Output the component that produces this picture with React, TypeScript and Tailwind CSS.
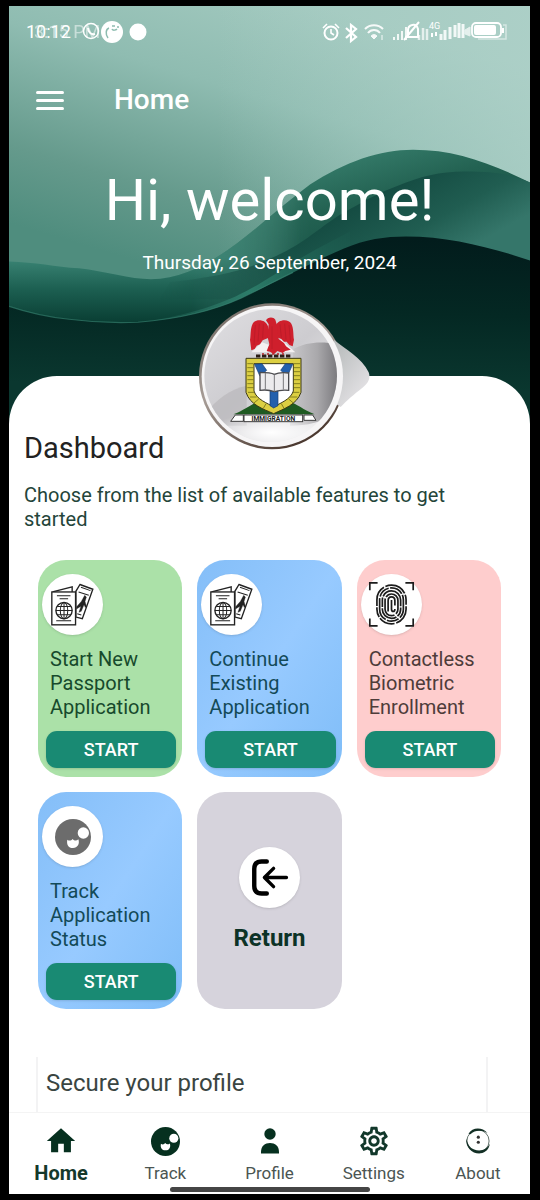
import type { ReactNode } from 'react';
import { MdHome, MdOutlineSettings } from 'react-icons/md';

interface Feature {
  id: string;
  title: string;
  cardClass: string;
  textClass: string;
  icon: ReactNode;
}

interface NavItem {
  label: string;
  active?: boolean;
  icon: ReactNode;
}

function HeaderWaves() {
  return (
    <svg
      className="absolute inset-0 h-full w-full"
      viewBox="9 6 521 419"
      preserveAspectRatio="none"
      aria-hidden="true"
    >
      <defs>
        <linearGradient id="sky" gradientUnits="userSpaceOnUse" x1="300" y1="0" x2="215" y2="285">
          <stop offset="0" stopColor="#a2c9bf" />
          <stop offset="0.35" stopColor="#8fbcb1" />
          <stop offset="0.75" stopColor="#659a8c" />
          <stop offset="1" stopColor="#4f8d7e" />
        </linearGradient>
        <linearGradient id="skyRight" x1="0.4" y1="0" x2="1" y2="0">
          <stop offset="0" stopColor="#b0d2ca" stopOpacity="0" />
          <stop offset="1" stopColor="#b0d2ca" stopOpacity="0.7" />
        </linearGradient>
        <linearGradient id="band" gradientUnits="userSpaceOnUse" x1="300" y1="150" x2="340" y2="290">
          <stop offset="0" stopColor="#3c8573" />
          <stop offset="0.45" stopColor="#236252" />
          <stop offset="1" stopColor="#144c41" />
        </linearGradient>
        <linearGradient id="bandLeft" gradientUnits="userSpaceOnUse" x1="0" y1="258" x2="0" y2="322">
          <stop offset="0" stopColor="#3b8575" />
          <stop offset="0.5" stopColor="#1c5f51" />
          <stop offset="1" stopColor="#0a3f34" />
        </linearGradient>
        <linearGradient id="bandFade" gradientUnits="userSpaceOnUse" x1="190" y1="0" x2="310" y2="0">
          <stop offset="0" stopColor="#fff" />
          <stop offset="1" stopColor="#000" />
        </linearGradient>
        <linearGradient id="bandIn" gradientUnits="userSpaceOnUse" x1="160" y1="0" x2="300" y2="0">
          <stop offset="0" stopColor="#000" />
          <stop offset="1" stopColor="#fff" />
        </linearGradient>
        <mask id="leftMask" maskUnits="userSpaceOnUse" x="9" y="140" width="521" height="200">
          <rect x="9" y="140" width="521" height="200" fill="url(#bandFade)" />
        </mask>
        <mask id="rightMask" maskUnits="userSpaceOnUse" x="9" y="140" width="521" height="200">
          <rect x="9" y="140" width="521" height="200" fill="url(#bandIn)" />
        </mask>
        <linearGradient id="fold" gradientUnits="userSpaceOnUse" x1="380" y1="180" x2="430" y2="270">
          <stop offset="0" stopColor="#12483f" />
          <stop offset="0.6" stopColor="#205d51" />
          <stop offset="1" stopColor="#35766a" />
        </linearGradient>
        <linearGradient id="ribbon" gradientUnits="userSpaceOnUse" x1="150" y1="0" x2="370" y2="0">
          <stop offset="0" stopColor="#2c7666" stopOpacity="0" />
          <stop offset="0.45" stopColor="#2c7c69" />
          <stop offset="1" stopColor="#1b5e4f" stopOpacity="0" />
        </linearGradient>
        <linearGradient id="base" x1="0.5" y1="0" x2="0.45" y2="1">
          <stop offset="0" stopColor="#021c1c" />
          <stop offset="0.4" stopColor="#042823" />
          <stop offset="0.8" stopColor="#0a372f" />
        </linearGradient>
      </defs>
      <rect x="9" y="6" width="521" height="419" fill="url(#sky)" />
      <rect x="9" y="6" width="521" height="419" fill="url(#skyRight)" />
      <path
        d="M9 262C35 263 55 267 79 269C105 272 130 280 151 280C210 279 255 226 310 185C345 162 380 150 413 150C455 150 490 163 530 183V330H9Z"
        fill="url(#band)"
        mask="url(#rightMask)"
      />
      <path
        d="M9 262C35 263 55 267 79 269C105 272 130 280 151 280C210 279 255 226 310 185V330H9Z"
        fill="url(#bandLeft)"
        mask="url(#leftMask)"
      />
      <path
        d="M170 283C235 275 250 268 275 257C305 244 320 227 344 213C362 203 377 194 396 187C420 177 440 172 465 172C492 172 510 174 530 183V300H160Z"
        fill="url(#fold)"
        mask="url(#rightMask)"
      />
      <path
        d="M150 322C215 310 240 297 275 275C300 258 325 245 350 232L350 252C330 258 310 268 293 277C250 303 200 319 150 325Z"
        fill="url(#ribbon)"
      />
      <path
        d="M9 307C30 314 50 318 69 320C92 323 115 324 138 323C175 320 210 313 241 299C275 283 305 266 344 249C365 240 385 237 406 237C450 237 490 248 530 261V425H9Z"
        fill="url(#base)"
      />
      <path
        d="M9 307C30 314 50 318 69 320C92 323 115 324 138 323C175 320 210 313 241 299C262 289 278 280 293 273"
        fill="none"
        stroke="#3a8775"
        strokeWidth="1.2"
        opacity="0.6"
      />
    </svg>
  );
}

function Emblem() {
  return (
    <svg className="h-[152px] w-[200px]" viewBox="-30 33 600 456" role="img" aria-label="Immigration crest">
      <defs>
        <linearGradient id="rim" x1="0" y1="0" x2="0.6" y2="1">
          <stop offset="0" stopColor="#6b625c" />
          <stop offset="0.5" stopColor="#a79d97" />
          <stop offset="1" stopColor="#4c3a31" />
        </linearGradient>
        <linearGradient id="face" x1="0" y1="0" x2="0.9" y2="1">
          <stop offset="0" stopColor="#e0dfe2" />
          <stop offset="0.5" stopColor="#cdccd0" />
          <stop offset="1" stopColor="#efeff0" />
        </linearGradient>
        <linearGradient id="gloss" x1="0" y1="0" x2="1" y2="0">
          <stop offset="0" stopColor="#c9c8cb" />
          <stop offset="0.55" stopColor="#a9a8ab" />
          <stop offset="1" stopColor="#757478" />
        </linearGradient>
        <linearGradient id="tail" x1="0" y1="0" x2="0.7" y2="1">
          <stop offset="0" stopColor="#b4b8b8" />
          <stop offset="1" stopColor="#e6e4e7" />
        </linearGradient>
        <radialGradient id="glow" cx="0.5" cy="0.5" r="0.5">
          <stop offset="0" stopColor="#fff" />
          <stop offset="1" stopColor="#fff" stopOpacity="0" />
        </radialGradient>
        <clipPath id="faceClip">
          <circle cx="272" cy="260" r="199" />
        </clipPath>
      </defs>
      <circle cx="276" cy="262" r="219" fill="url(#rim)" />
      <path d="M462 152C495 180 545 205 566 250C572 265 566 282 550 294C520 318 500 335 482 354L460 340Z" fill="url(#tail)" />
      <circle cx="277" cy="262" r="212" fill="#f6f5f6" />
      <circle cx="272" cy="260" r="199" fill="url(#face)" />
      <g clipPath="url(#faceClip)">
        <path d="M340 180C380 158 430 155 480 168V360C440 400 380 410 330 410Z" fill="url(#gloss)" />
        <path d="M70 380C110 330 150 300 200 290V410H90Z" fill="#b5b4b7" opacity="0.6" />
        <ellipse cx="275" cy="430" rx="190" ry="60" fill="url(#glow)" />
      </g>
      {/* eagle */}
      <path d="M246 160L214 190H262L268 168ZM302 150L346 190H300Z" fill="#f4f1f2" />
      <g fill="#cf1f2c">
        <path d="M264 112C258 90 226 88 218 104C210 120 213 140 210 152L214 184L224 180L230 170L240 166L248 154L266 146Z" />
        <path d="M286 112C292 90 326 88 334 104C342 120 339 138 342 152L338 172L328 168L320 158L312 158L304 150L288 144Z" />
        <path d="M258 94C262 84 280 82 286 92L290 106L296 150L312 162L318 172L332 182L316 186L308 192L292 186L282 196L270 188L260 186L268 166L262 140L266 106Z" />
      </g>
      <path
        d="M226 108L222 168M238 104L234 158M250 106L248 148M300 106L304 146M314 104L318 152M327 108L332 160M276 112V180"
        stroke="#a31722"
        strokeWidth="2"
        opacity="0.6"
      />
      <path d="M228 201H334" stroke="#2b1d16" strokeWidth="9" strokeDasharray="13 5" />
      <path d="M246 195H320" stroke="#b3262b" strokeWidth="4" strokeDasharray="6 9" />
      {/* ground and shield */}
      <path d="M160 376C195 364 215 342 240 338H330C350 344 370 362 404 376Z" fill="#1f5a22" />
      <path
        d="M198 208H363V310C350 348 310 360 281 374C250 360 210 348 198 310Z"
        fill="#dccf42"
        stroke="#3d3a16"
        strokeWidth="3"
      />
      <path
        d="M202 224H220M202 236H220M202 248H220M202 260H220M202 272H220M202 284H220M202 296H220M204 310H222M210 324H230M341 224H360M341 236H360M341 248H360M341 260H360M341 272H360M341 284H360M341 296H360M339 310H358M330 324H352M222 342L236 330M250 358L258 344M340 342L326 330M312 358L304 344"
        stroke="#85801f"
        strokeWidth="3"
      />
      <path d="M222 224H340V306C332 332 300 342 281 354C262 342 230 332 222 306Z" fill="#fff" stroke="#3d3a16" strokeWidth="3" />
      <path d="M224 226L246 224L260 244L240 262ZM338 226L316 224L302 244L322 262Z" fill="#2360ad" stroke="#173d70" strokeWidth="2" />
      <path d="M270 304H294V350L281 357L270 350Z" fill="#2360ad" stroke="#173d70" strokeWidth="2" />
      <path
        d="M240 250C255 250 272 250 283 256C296 250 312 250 326 252V304C310 302 296 304 283 308C270 303 255 302 240 304Z"
        fill="#ecebed"
        stroke="#4a4a4e"
        strokeWidth="4"
      />
      <path d="M283 256V308M256 252V302M310 252V302" stroke="#77777b" strokeWidth="3" />
      {/* motto scroll */}
      <path d="M166 378H190V397H152ZM372 378H398L408 394H372Z" fill="#fff" stroke="#3a3a3a" strokeWidth="3" />
      <rect x="192" y="378" width="176" height="20" fill="#fff" stroke="#3a3a3a" strokeWidth="3" />
      <text x="280" y="395" textAnchor="middle" fontFamily="Roboto, sans-serif" fontSize="20" fontWeight="700" fill="#222">
        IMMIGRATION
      </text>
    </svg>
  );
}

function PassportIcon() {
  return (
    <svg className="size-full" viewBox="68 79 180 180" fill="none" stroke="#222" strokeWidth="4" aria-hidden="true">
      <path d="M180 110L218 124L187 211L168 206V130Z" fill="#fff" />
      <path d="M183 118L211 128M176 132L206 142M172 196L184 200" strokeWidth="3" />
      <path d="M194 142L184 160L170 176V182L183 174L177 192L184 189L192 170L196 178L199 174L195 160L199 147Z" fill="#222" strokeWidth="1" />
      <path d="M99 132L157 117V132" fill="#fff" />
      <rect x="97" y="132" width="70" height="97" fill="#fff" />
      <path d="M112 143H152M120 152H145M110 217H154" strokeWidth="3" />
      <circle cx="133" cy="187" r="24" />
      <ellipse cx="133" cy="187" rx="11" ry="24" strokeWidth="3" />
      <path d="M133 163V211M109 187H157M113 175H153M113 199H153" strokeWidth="3" />
    </svg>
  );
}

function FingerprintIcon() {
  return (
    <svg className="size-full" viewBox="304 79 180 180" fill="none" stroke="#1c1c1c" strokeWidth="5" aria-hidden="true">
      <path d="M330 127V105H353M435 105H458V127M458 210V232H435M353 232H330V210" />
      <rect x="351" y="112" width="86" height="114" rx="43" strokeDasharray="48 4 30 4 62 5" />
      <rect x="359" y="120" width="70" height="98" rx="35" strokeDasharray="36 4 70 5" />
      <rect x="367" y="129" width="54" height="81" rx="27" strokeDasharray="60 4 28 4" />
      <rect x="375" y="138" width="38" height="64" rx="19" strokeDasharray="70 5" />
      <path d="M384 190V158C384 143 404 143 404 158V172M394 156V182C394 192 404 192 404 182" />
    </svg>
  );
}

function TrackIcon({ color }: { color: string }) {
  return (
    <svg className="size-full" viewBox="0 0 108 108" aria-hidden="true">
      <circle cx="54" cy="54" r="54" fill={color} />
      <circle cx="85" cy="42" r="17" fill="#fff" />
      <path d="M37 62C42 66 48 66 53 60C58 66 65 66 70 61C75 74 68 87 54 87C40 87 34 76 37 62Z" fill="#fff" />
    </svg>
  );
}

function ReturnIcon() {
  return (
    <svg className="size-full" viewBox="659 204 180 180" fill="none" stroke="#000" strokeLinecap="round" strokeLinejoin="round" aria-hidden="true">
      <path d="M741 247H726Q704 247 704 269V319Q704 341 726 341H741" strokeWidth="13" />
      <path d="M799 294H734M761 267L734 294L761 321" strokeWidth="10" />
    </svg>
  );
}

function PersonIcon() {
  return (
    <svg className="h-[26px] w-5" viewBox="0 0 20 26" fill="#06301f" aria-hidden="true">
      <circle cx="10" cy="6" r="5.7" />
      <path d="M1 25.5V24C1 18 5 15 10 15C15 15 19 18 19 24V25.5Z" />
    </svg>
  );
}

function AboutIcon() {
  return (
    <svg className="size-[26px]" viewBox="585 268 78 82" aria-hidden="true">
      <circle cx="624" cy="309" r="35" fill="none" stroke="#5c6b65" strokeWidth="3" />
      <path d="M594 286C606 266 636 264 654 284C636 274 614 274 600 288Z" fill="#122f25" />
      <path d="M587 300C584 330 606 350 632 348C648 346 660 334 661 318C652 338 630 343 612 336C598 330 591 318 587 300Z" fill="#122f25" />
      <circle cx="625" cy="297" r="5" fill="#333" />
      <circle cx="625" cy="313" r="5" fill="#333" />
    </svg>
  );
}

function StatusIcons() {
  return (
    <svg className="h-6 w-[190px]" viewBox="320 20 190 24" fill="none" stroke="#fff" aria-hidden="true">
      <g strokeWidth="2">
        <circle cx="331" cy="33" r="6.5" />
        <path d="M331 29V33L334 35M323 28L327 24M339 28L335 24" strokeWidth="1.6" />
      </g>
      <path d="M346 28L356 37L351 41V25L356 29L346 38" strokeWidth="2.2" />
      <g opacity="0.9" strokeWidth="2">
        <path d="M365 29C370 24 378 24 383 29M368 33C371 29 377 29 380 33" />
        <path d="M371 36C373 34 375 34 377 36L374 39Z" fill="#fff" strokeWidth="1" />
        <path d="M382 35V40" strokeWidth="1" />
      </g>
      <path d="M394 40V37M398 40V34M402 40V31M406 40V27" strokeWidth="2" opacity="0.85" />
      <path d="M405 37H419M408 37V30C408 25 416 22 418 29V37M404 40L419 22" strokeWidth="2" />
      <path d="M419 40V35M423 40V28M427 40V29" strokeWidth="2.5" opacity="0.7" />
      <text x="429" y="29" fontFamily="Roboto, sans-serif" fontSize="9" fill="#fff" stroke="none">
        4G
      </text>
      <path d="M432 33V37M436 32V36" strokeWidth="2" />
      <path d="M441 40V34M445 40V30M450 39V27M455 37V25M459 38V23M463 38V24" strokeWidth="3" opacity="0.85" />
      <path d="M478 39H506V25H503" opacity="0.5" strokeWidth="1.5" />
      <path d="M465 30L470 27V36L465 34Z" fill="#fff" opacity="0.7" />
      <rect x="472" y="23" width="29" height="14" rx="4" strokeWidth="1.8" />
      <rect x="474" y="25" width="22" height="10" rx="2" fill="#fff" stroke="none" />
      <path d="M503 28V33" strokeWidth="2" />
    </svg>
  );
}

function StatusBar() {
  return (
    <div className="flex h-6 items-center justify-between pr-5 pl-[17px] text-white">
      <div className="flex items-center">
        <div className="relative w-[54px] text-lg leading-6">
          10:12
          <span className="absolute top-0 left-2 leading-6 whitespace-nowrap opacity-50">3:15 PM</span>
        </div>
        <svg className="h-6 w-[70px]" viewBox="80 20 70 24" aria-hidden="true">
          <circle cx="91" cy="31" r="7.5" fill="none" stroke="#fff" strokeWidth="1.5" />
          <path d="M88 28C88 32 91 35 95 34" fill="none" stroke="#fff" strokeWidth="2" />
          <circle cx="112" cy="32" r="11" fill="#fff" />
          <path d="M108 38C105 34 106 29 109 28M112 26H115M117 27H119M112 29C113 31 116 30 117 29" fill="none" stroke="#8dbcb0" strokeWidth="1.5" />
          <circle cx="138" cy="32" r="8.5" fill="#fff" />
        </svg>
      </div>
      <StatusIcons />
    </div>
  );
}

const blueCard = 'bg-linear-to-br from-[#84bef8] via-[#97caff] to-[#7fbdf8]';

const features: Feature[] = [
  {
    id: 'new',
    title: 'Start New Passport Application',
    cardClass: 'bg-[#abe1a8]',
    textClass: 'text-[#174a2c]',
    icon: <PassportIcon />,
  },
  {
    id: 'continue',
    title: 'Continue Existing Application',
    cardClass: blueCard,
    textClass: 'text-[#134a58]',
    icon: <PassportIcon />,
  },
  {
    id: 'biometric',
    title: 'Contactless Biometric Enrollment',
    cardClass: 'bg-[#fecdcd]',
    textClass: 'text-[#4e3c3a]',
    icon: <FingerprintIcon />,
  },
  {
    id: 'track',
    title: 'Track Application Status',
    cardClass: blueCard,
    textClass: 'text-[#134a58]',
    icon: (
      <div className="size-9">
        <TrackIcon color="#6c6c6c" />
      </div>
    ),
  },
];

const navItems: NavItem[] = [
  { label: 'Home', active: true, icon: <MdHome size={34} color="#06301f" /> },
  {
    label: 'Track',
    icon: (
      <div className="size-[29px]">
        <TrackIcon color="#06301f" />
      </div>
    ),
  },
  { label: 'Profile', icon: <PersonIcon /> },
  { label: 'Settings', icon: <MdOutlineSettings size={34} color="#12382b" /> },
  { label: 'About', icon: <AboutIcon /> },
];

function FeatureCard({ feature }: { feature: Feature }) {
  return (
    <article className={`flex flex-col rounded-[28px] pt-[14px] pr-[2px] pb-[9px] pl-1 ${feature.cardClass}`}>
      <div className="flex size-[61px] items-center justify-center rounded-full bg-white shadow">{feature.icon}</div>
      <h2 className={`mt-3 px-2 text-xl leading-6 ${feature.textClass}`}>{feature.title}</h2>
      <div className="mt-auto flex px-1">
        <button
          type="button"
          className="h-[37px] flex-1 rounded-[11px] bg-[#198a73] text-lg font-medium text-white shadow-sm"
        >
          START
        </button>
      </div>
    </article>
  );
}

export default function App() {
  return (
    <div className="flex min-h-screen flex-col bg-black py-[6px] pr-[10px] pl-[9px] font-['Roboto',sans-serif]">
      <div className="flex flex-1 flex-col bg-white">
        <header className="relative">
          <HeaderWaves />
          <div className="relative pt-[14px] pb-[149px]">
            <StatusBar />
            <div className="mt-9 flex h-10 items-center gap-[50px] pl-[27px]">
              <button type="button" aria-label="Open menu" className="flex w-7 flex-col gap-[5px]">
                <span className="h-[3px] rounded-full bg-white" />
                <span className="h-[3px] rounded-full bg-white" />
                <span className="h-[3px] rounded-full bg-white" />
              </button>
              <span className="text-[28px] leading-10 font-medium text-white">Home</span>
            </div>
            <h1 className="mt-[46px] text-center text-[58px] leading-[68px] text-white">Hi, welcome!</h1>
            <p className="mt-[17px] text-center text-[19px] leading-6 text-white">Thursday, 26 September, 2024</p>
          </div>
        </header>

        <main className="relative -mt-12 flex flex-1 flex-col rounded-t-[48px] bg-white pt-[54px]">
          <div className="absolute -top-[76px] left-1/2 -translate-x-1/2">
            <Emblem />
          </div>
          <div className="pr-10 pl-[15px]">
            <h2 className="text-[29px] leading-9 text-[#222]">Dashboard</h2>
            <p className="mt-[17px] text-xl leading-6 text-[#24453a]">
              Choose from the list of available features to get started
            </p>
          </div>

          <div className="mt-[29px] grid auto-rows-[217px] grid-cols-3 gap-[15px] px-[29px]">
            {features.map((feature) => (
              <FeatureCard key={feature.id} feature={feature} />
            ))}
            <button
              type="button"
              className="flex flex-col items-center justify-center gap-[14px] rounded-[28px] bg-[#d6d3dc] text-2xl font-bold text-[#0c3226]"
            >
              <span className="flex size-[61px] items-center justify-center rounded-full bg-white shadow">
                <ReturnIcon />
              </span>
              Return
            </button>
          </div>

          <section className="mt-12 mr-[42px] ml-[27px] flex-1 border-x-2 border-[#f3f3f4] px-2 pt-2">
            <h2 className="text-2xl leading-9 text-[#3a4542]">Secure your profile</h2>
          </section>
        </main>

        <nav className="relative flex h-[82px] border-t border-[#f4f4f4] bg-white">
          {navItems.map((item) => (
            <a key={item.label} href="#" className="flex flex-1 flex-col items-center gap-[2px] pt-[10px]">
              <span className="flex h-9 items-center">{item.icon}</span>
              <span
                className={
                  item.active
                    ? 'text-xl leading-6 font-bold text-[#14382b]'
                    : 'text-[17px] leading-6 text-[#4b5552]'
                }
              >
                {item.label}
              </span>
            </a>
          ))}
          <div className="absolute bottom-[2px] left-1/2 h-[5px] w-[200px] -translate-x-1/2 rounded-full bg-[#454545]" />
        </nav>
      </div>
    </div>
  );
}
